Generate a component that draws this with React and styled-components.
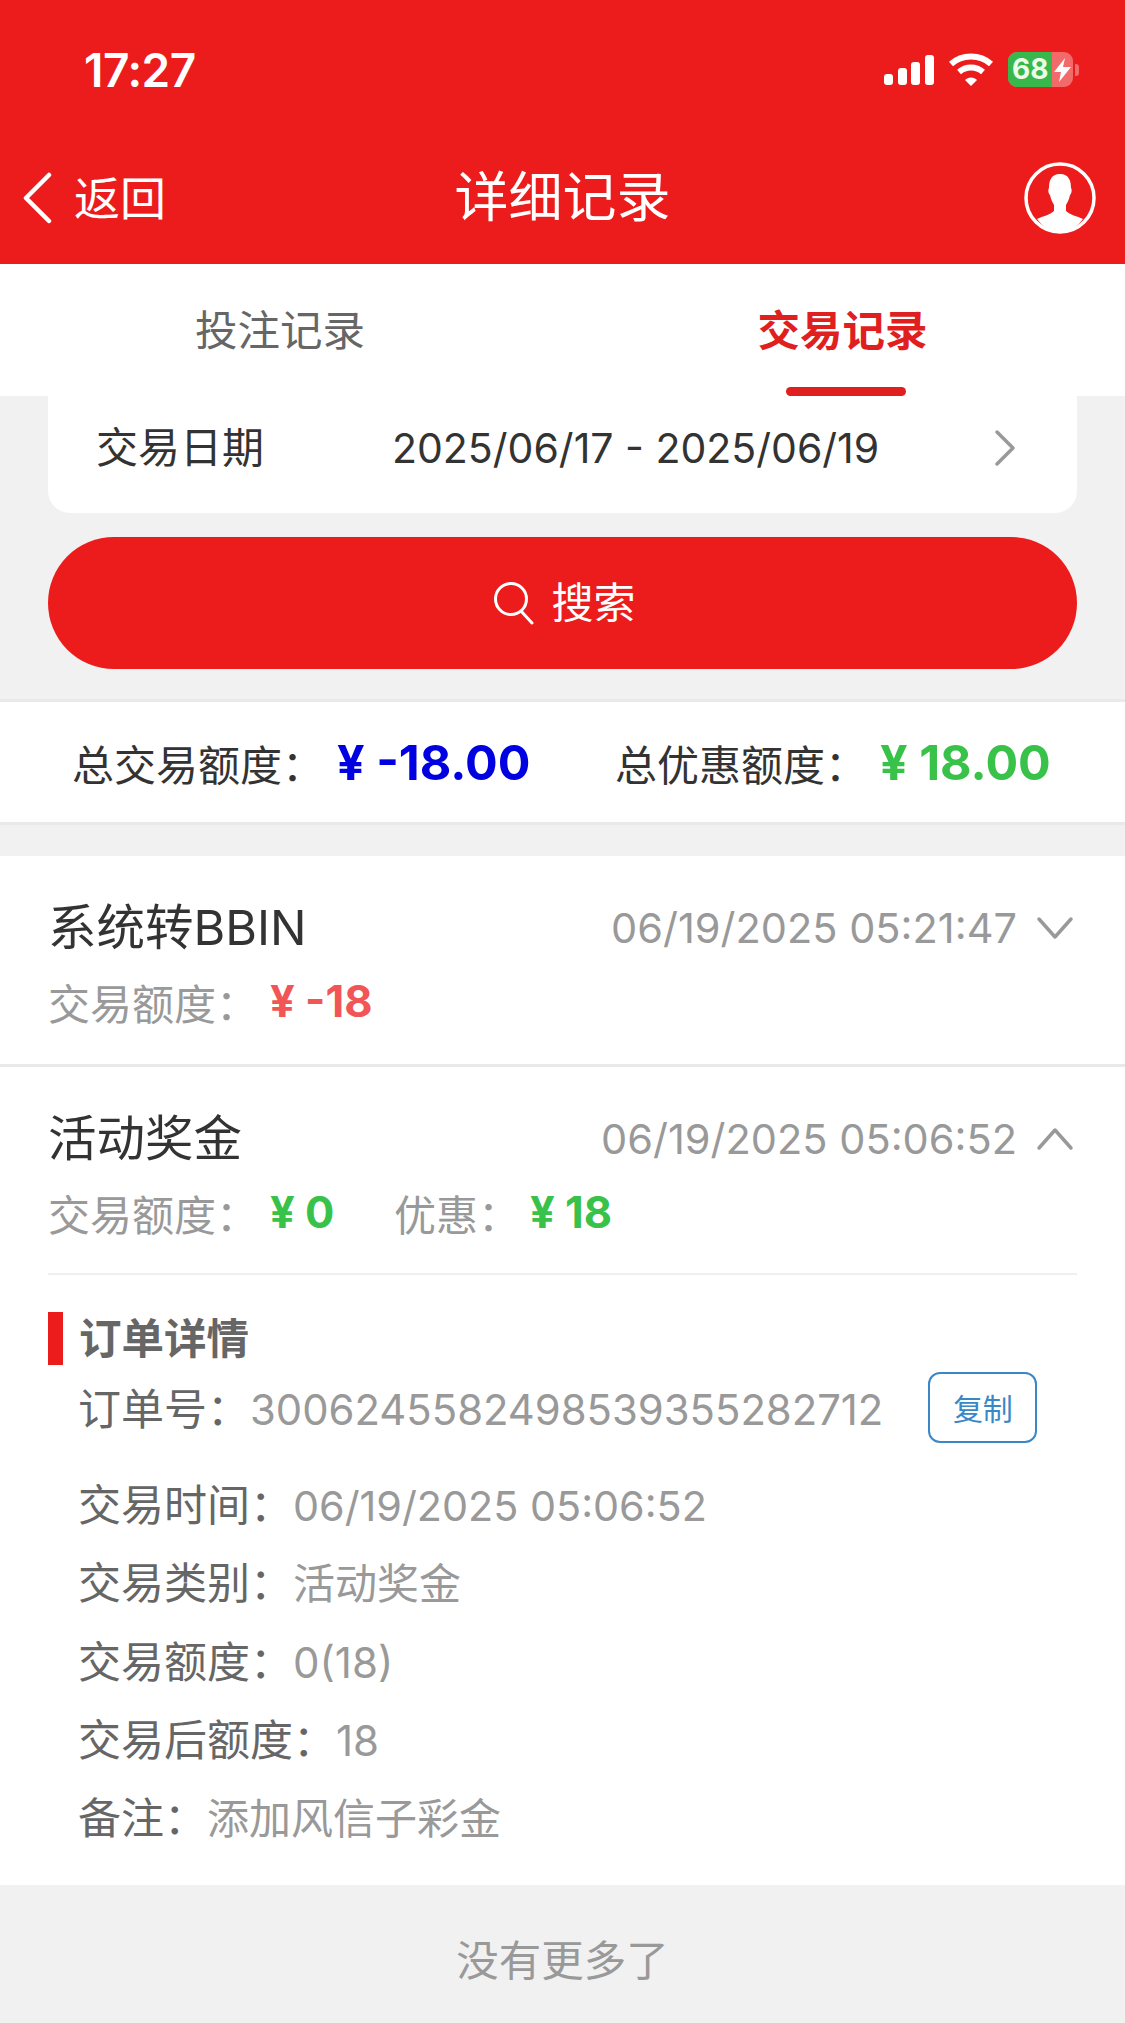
import React from "react";
import styled, { createGlobalStyle } from "styled-components";

const Global = createGlobalStyle`
  html, body { margin: 0; padding: 0; background: #f1f1f1; }
  * { box-sizing: border-box; }
`;

const RED = "#ec1c1c";
const FONT = `Inter, "Noto Sans CJK SC", sans-serif`;

const Page = styled.div`
  width: 1125px;
  height: 2023px;
  overflow: hidden;
  display: flex;
  flex-direction: column;
  background: #f1f1f1;
  font-family: ${FONT};
`;
const Header = styled.header`
  height: 264px;
  background: ${RED};
  color: #fff;
  display: flex;
  flex-direction: column;
`;
const StatusBar = styled.div`
  height: 140px;
  display: flex;
  align-items: flex-start;
  justify-content: space-between;
  padding: 46px 46px 0 84px;
`;
const Time = styled.div`
  font-size: 46px;
  line-height: 48px;
  font-weight: 600;
  letter-spacing: -0.5px;
`;
const StatusIcons = styled.div`
  display: flex;
  align-items: center;
  gap: 14px;
  padding-top: 6px;
`;
const Battery = styled.div`
  position: relative;
  width: 65px;
  height: 35px;
  border-radius: 9px;
  overflow: hidden;
  background: #f26a6a;
  display: flex;
  align-items: center;
`;
const BatteryFill = styled.div`
  width: 44px;
  height: 100%;
  background: #38b84c;
  font-size: 28px;
  line-height: 35px;
  font-weight: 700;
  color: #eefbe9;
  padding-left: 4px;
  letter-spacing: 0;
  white-space: nowrap;
`;
const Bolt = styled.svg`
  width: 21px;
  height: 24px;
`;
const Nub = styled.div`
  width: 4px;
  height: 12px;
  margin-left: -12px;
  border-radius: 0 3px 3px 0;
  background: #f26a6a;
`;
const NavBar = styled.div`
  flex: 1;
  display: flex;
  align-items: center;
  justify-content: space-between;
  padding: 0 29px 8px 22px;
  position: relative;
`;
const Back = styled.div`
  display: flex;
  align-items: center;
  gap: 22px;
  font-size: 46px;
  line-height: 60px;
`;
const NavTitle = styled.div`
  position: absolute;
  left: 0;
  right: 0;
  top: 24px;
  text-align: center;
  font-size: 54px;
  line-height: 68px;
  pointer-events: none;
`;
const Tabs = styled.nav`
  height: 132px;
  background: #fff;
  display: flex;
`;
const Tab = styled.div`
  position: relative;
  width: ${p => p.$w}px;
  display: flex;
  justify-content: center;
  padding-top: 39px;
  font-size: 42.5px;
  line-height: 56px;
  font-weight: ${p => (p.$active ? 700 : 400)};
  color: ${p => (p.$active ? "#e01f1f" : "#666")};
  ${p =>
    p.$active &&
    `&::after {
      content: "";
      position: absolute;
      bottom: 0;
      left: calc(50% + 3px);
      width: 120px;
      height: 9px;
      margin-left: -60px;
      border-radius: 5px;
      background: #e01f1f;
    }`}
`;
const Filter = styled.section`
  padding: 0 48px;
  height: 303px;
  display: flex;
  flex-direction: column;
`;
const DateCard = styled.div`
  height: 117px;
  background: #fff;
  border-radius: 0 0 22px 22px;
  display: flex;
  align-items: flex-start;
  padding: 20px 0 0 48px;
  color: #333;
  font-size: 42px;
  line-height: 64px;
`;
const DateLabel = styled.div`
  width: 296px;
`;
const DateValue = styled.div`
  width: 602px;
  font-size: 41px;
`;
const DateArrow = styled.div`
  margin-top: 13px;
  display: flex;
`;
const SearchButton = styled.div`
  margin-top: 24px;
  height: 132px;
  border-radius: 66px;
  background: ${RED};
  color: #fff;
  display: flex;
  align-items: center;
  justify-content: center;
  gap: 16px;
  font-size: 42px;
  line-height: 56px;
  padding-left: 4px;
`;
const Summary = styled.section`
  height: 126px;
  background: #fff;
  border-top: 3px solid #e9e9e9;
  border-bottom: 3px solid #e9e9e9;
  display: flex;
  align-items: center;
  padding: 0 0 0 72px;
  font-size: 42px;
  color: #333;
`;
const SummaryCell = styled.div`
  display: flex;
  align-items: center;
  width: ${p => (p.$w ? `${p.$w}px` : "auto")};
`;
const SummaryLabel = styled.span`
  width: 265px;
  flex: none;
`;
const Big = styled.span`
  font-size: 48.5px;
  font-weight: 700;
  color: ${p => p.$c};
  white-space: nowrap;
`;
const Record = styled.article`
  margin-top: ${p => p.$mt || 0}px;
  background: #fff;
  border-bottom: ${p => (p.$line ? "3px solid #e9e9e9" : "none")};
  padding: 39px 48px 0;
  height: ${p => p.$h}px;
`;
const RecordHead = styled.div`
  display: flex;
  align-items: center;
  justify-content: space-between;
  height: 66px;
`;
const RecordTitle = styled.div`
  font-size: 48.5px;
  line-height: 66px;
  color: #333;
`;
const RecordRight = styled.div`
  display: flex;
  align-items: center;
  gap: 19px;
  color: #999;
  font-size: 41.5px;
  line-height: 60px;
  margin-right: 3px;
`;
const Amounts = styled.div`
  display: flex;
  align-items: center;
  height: 56px;
  margin-top: 12px;
  font-size: 42px;
  color: #999;
`;
const AmountLabel = styled.span`
  width: ${p => p.$w}px;
  flex: none;
`;
const Amount = styled.span`
  font-size: 43.5px;
  font-weight: 700;
  color: ${p => p.$c};
  width: ${p => (p.$w ? `${p.$w}px` : "auto")};
`;
const Rule = styled.div`
  height: 2px;
  background: #efefef;
  margin-top: 33px;
`;
const DetailTitle = styled.div`
  margin-top: 37px;
  height: 53px;
  border-left: 15px solid ${RED};
  padding-left: 16px;
  font-size: 42.5px;
  line-height: 54px;
  font-weight: 700;
  color: #666;
`;
const DetailRows = styled.div`
  padding-left: 30px;
`;
const OrderRow = styled.div`
  display: flex;
  align-items: center;
  height: 71px;
  margin-top: 7px;
  margin-bottom: 23px;
  font-size: 43px;
  color: #666;
  white-space: nowrap;
`;
const OrderText = styled.div`
  line-height: 60px;
  padding-top: 4px;
`;
const Row = styled.div`
  height: 78.3px;
  line-height: 78.3px;
  font-size: 43px;
  color: #666;
  white-space: nowrap;
`;
const Val = styled.span`
  color: #999;
  font-size: ${p => p.$s || 42}px;
`;
const Copy = styled.div`
  margin-left: 45px;
  margin-top: -1px;
  width: 109px;
  height: 71px;
  border: 2px solid #3a87c8;
  border-radius: 12px;
  color: #3a87c8;
  font-size: 30px;
  display: flex;
  align-items: center;
  justify-content: center;
`;
const Footer = styled.footer`
  flex: 1;
  display: flex;
  justify-content: center;
  padding-top: 48px;
  font-size: 42.5px;
  line-height: 56px;
  color: #999;
`;

const Chevron = ({ d, w = 40, h = 40, color = "#999", sw = 3.5 }) => (
  <svg width={w} height={h} viewBox={`0 0 ${w} ${h}`} fill="none">
    <path d={d} stroke={color} strokeWidth={sw} strokeLinecap="round" strokeLinejoin="round" />
  </svg>
);

const Signal = () => (
  <svg width="50" height="30" viewBox="0 0 50 30" fill="#fff">
    <rect x="0" y="19" width="9" height="11" rx="3" />
    <rect x="14" y="13" width="9" height="17" rx="3" />
    <rect x="27" y="7" width="9" height="23" rx="3" />
    <rect x="41" y="0" width="9" height="30" rx="3" />
  </svg>
);
const Wifi = () => (
  <svg width="46" height="34" viewBox="0 0 46 34" fill="none" stroke="#fff" strokeWidth="6">
    <path d="M3 11 C14 1 32 1 43 11" />
    <path d="M11 19 C18 13 28 13 35 19" />
    <path d="M17 27 L23 33 L29 27 C26 23.5 20 23.5 17 27Z" fill="#fff" stroke="none" />
  </svg>
);
const Person = () => (
  <svg width="72" height="72" viewBox="0 0 72 72">
    <circle cx="36" cy="36" r="34" fill="none" stroke="#fff" strokeWidth="3.5" />
    <path
      fill="#fff"
      d="M36 12 C45 12 47 19 47 26 C48 27 48 31 46 33 C45 38 43 41 42 43 L42 49 C46 53 53 54 59 57 C53 65 45 70 36 70 C27 70 19 65 13 57 C19 54 26 53 30 49 L30 43 C29 41 27 38 26 33 C24 31 24 27 25 26 C25 19 27 12 36 12Z"
    />
  </svg>
);
const Search = () => (
  <svg width="42" height="44" viewBox="0 0 42 44" fill="none" stroke="#fff" strokeWidth="3" strokeLinecap="round">
    <circle cx="18" cy="18" r="15.5" />
    <path d="M28 30 L39 42" />
  </svg>
);

export default function App() {
  return (
    <Page>
      <Global />
      <Header>
        <StatusBar>
          <Time>17:27</Time>
          <StatusIcons>
            <Signal />
            <Wifi />
            <Battery>
              <BatteryFill>68</BatteryFill>
              <Bolt viewBox="0 0 21 24">
                <path d="M13 0 L2 14 H9 L7 24 L19 9 H11Z" fill="#fff" />
              </Bolt>
            </Battery>
            <Nub />
          </StatusIcons>
        </StatusBar>
        <NavBar>
          <Back>
            <Chevron d="M27 3 L4 26 L27 49" w={30} h={52} color="#fff" sw={4.5} />
            <span>返回</span>
          </Back>
          <NavTitle>详细记录</NavTitle>
          <Person />
        </NavBar>
      </Header>
      <Tabs>
        <Tab $w={562}>投注记录</Tab>
        <Tab $w={567} $active>交易记录</Tab>
      </Tabs>
      <Filter>
        <DateCard>
          <DateLabel>交易日期</DateLabel>
          <DateValue>2025/06/17 - 2025/06/19</DateValue>
          <DateArrow>
            <Chevron d="M3 3 L19 19 L3 35" w={22} h={38} color="#999" sw={3.5} />
          </DateArrow>
        </DateCard>
        <SearchButton>
          <Search />
          <span>搜索</span>
        </SearchButton>
      </Filter>
      <Summary>
        <SummaryCell $w={543}>
          <SummaryLabel>总交易额度：</SummaryLabel>
          <Big $c="#0000e0">¥ -18.00</Big>
        </SummaryCell>
        <SummaryCell>
          <SummaryLabel>总优惠额度：</SummaryLabel>
          <Big $c="#39c24a">¥ 18.00</Big>
        </SummaryCell>
      </Summary>
      <Record $mt={31} $h={211} $line>
        <RecordHead>
          <RecordTitle>系统转BBIN</RecordTitle>
          <RecordRight>
            06/19/2025 05:21:47
            <Chevron d="M3 4 L19 22 L35 4" w={38} h={26} />
          </RecordRight>
        </RecordHead>
        <Amounts>
          <AmountLabel $w={222}>交易额度：</AmountLabel>
          <Amount $c="#f25555">¥ -18</Amount>
        </Amounts>
      </Record>
      <Record $h={818}>
        <RecordHead>
          <RecordTitle>活动奖金</RecordTitle>
          <RecordRight>
            06/19/2025 05:06:52
            <Chevron d="M3 22 L19 4 L35 22" w={38} h={26} />
          </RecordRight>
        </RecordHead>
        <Amounts>
          <AmountLabel $w={222}>交易额度：</AmountLabel>
          <Amount $c="#39c24a" $w={124}>¥ 0</Amount>
          <AmountLabel $w={136}>优惠：</AmountLabel>
          <Amount $c="#39c24a">¥ 18</Amount>
        </Amounts>
        <Rule />
        <DetailTitle>订单详情</DetailTitle>
        <DetailRows>
          <OrderRow>
            <OrderText>订单号：<Val $s={41.8}>3006245582498539355282712</Val></OrderText>
            <Copy>复制</Copy>
          </OrderRow>
          <Row>交易时间：<Val $s={41.3}>06/19/2025 05:06:52</Val></Row>
          <Row>交易类别：<Val>活动奖金</Val></Row>
          <Row>交易额度：<Val>0(18)</Val></Row>
          <Row>交易后额度：<Val>18</Val></Row>
          <Row>备注：<Val>添加风信子彩金</Val></Row>
        </DetailRows>
      </Record>
      <Footer>没有更多了</Footer>
    </Page>
  );
}
